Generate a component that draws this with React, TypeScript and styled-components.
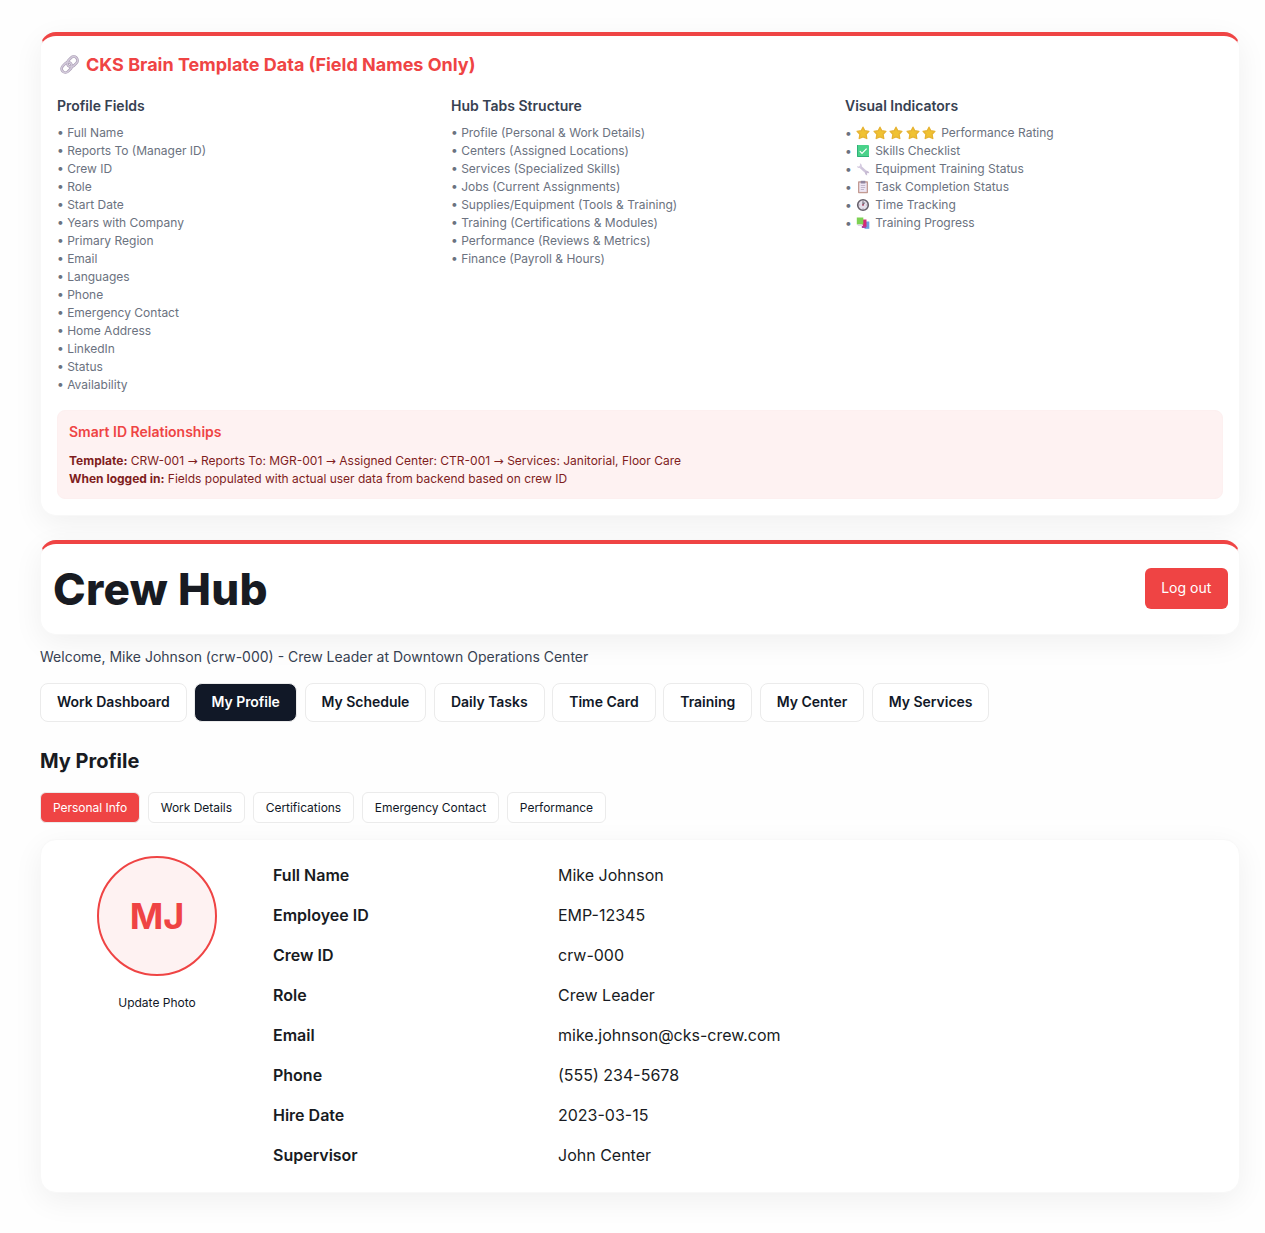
import React from "react";
import styled, { createGlobalStyle, css } from "styled-components";

const RED = "#ef4444";

const GlobalStyle = createGlobalStyle`
  *, *::before, *::after { box-sizing: border-box; }
  html { overflow: hidden; }
  body { margin: 0; background: #fefefe; color: #181b22; font-family: Inter, sans-serif; font-size: 16px; line-height: 24px; }
  h1, h2, h3, p, ul, dl, dd { margin: 0; padding: 0; }
  button { font-family: inherit; margin: 0; }
`;

const Page = styled.main`
  width: 1280px;
  min-height: 1233px;
  padding: 32px 40px 40px;
`;

const Card = styled.section<{ $accent?: boolean }>`
  background: #fff;
  border: 1px solid #f8f8f8;
  border-radius: 16px;
  box-shadow: 0 8px 30px rgba(0, 0, 0, 0.06);
  ${(p) => p.$accent && css`border-top: 4px solid ${RED};`}
`;

const TemplateCard = styled(Card)`
  height: 484px;
  padding: 16px;
  margin-bottom: 24px;
`;

const TemplateTitle = styled.h2`
  display: flex;
  align-items: center;
  gap: 6px;
  height: 25px;
  margin-bottom: 16px;
  padding-left: 2px;
  color: ${RED};
  font-size: 18px;
  font-weight: 700;
`;

const Columns = styled.div`
  display: grid;
  grid-template-columns: repeat(3, 1fr);
  gap: 16px;
  height: 301px;
  margin-bottom: 16px;
`;

const ColumnTitle = styled.h3`
  margin-bottom: 5px;
  color: #374151;
  font-size: 14px;
  line-height: 26px;
  font-weight: 600;
`;

const List = styled.ul`
  list-style: none;
  color: #6b7280;
  font-size: 12px;
  line-height: 18px;
`;

const ListItem = styled.li`
  display: flex;
  align-items: center;
  height: 18px;
  white-space: pre;
`;

const IconRow = styled.span`
  display: inline-flex;
  gap: 2.5px;
  margin: 0 5px 0 1px;
`;

const SmartBox = styled.div`
  height: 89px;
  padding: 10px 11px;
  background: #fef2f2;
  border: 1px solid #fdf0f0;
  border-radius: 8px;
  color: #7f1d1d;
  font-size: 12px;
  line-height: 18px;
`;

const SmartTitle = styled.h3`
  margin-bottom: 10px;
  color: ${RED};
  font-size: 14px;
  line-height: 21px;
  font-weight: 600;
`;

const SmartLine = styled.p`
  height: 18px;
`;

const Arrow = styled.span`
  display: inline-block;
  width: 10.3px;
  font-family: "DejaVu Sans", sans-serif;
  font-size: 12px;
  line-height: 12px;
  text-align: center;
`;

const HubHeader = styled(Card)`
  display: flex;
  align-items: center;
  justify-content: space-between;
  height: 95px;
  padding: 0 11.5px 1px 12px;
`;

const HubTitle = styled.h1`
  padding-top: 2px;
  font-size: 44px;
  line-height: 53px;
  font-weight: 800;
  letter-spacing: 0.3px;
`;

const LogoutButton = styled.button`
  height: 41px;
  width: 82.5px;
  padding: 0 0 2px;
  color: #fff;
  background: ${RED};
  border: 0;
  border-radius: 6px;
  font-size: 14px;
`;

const Welcome = styled.p`
  margin: 11px 0 16px;
  color: #374151;
  font-size: 14px;
  line-height: 21px;
`;

const Tabs = styled.nav`
  display: flex;
  gap: 7.65px;
  margin-bottom: 24px;
`;

const Tab = styled.button<{ $active?: boolean }>`
  height: 39px;
  padding: 0 16px 2px;
  border: 1px solid #ebebeb;
  border-radius: 8px;
  font-size: 14px;
  font-weight: 600;
  letter-spacing: -0.03px;
  color: ${(p) => (p.$active ? "#fff" : "#111827")};
  background: ${(p) => (p.$active ? "#111827" : "#fff")};
`;

const SectionTitle = styled.h2`
  margin-bottom: 16px;
  font-size: 20px;
  line-height: 30px;
  font-weight: 700;
`;

const SubTabs = styled(Tabs)`
  gap: 7.6px;
  margin-bottom: 16px;
`;

const SubTab = styled(Tab)`
  height: 31px;
  padding: 0 12px;
  border-radius: 6px;
  font-size: 12px;
  font-weight: 400;
  letter-spacing: -0.02px;
  background: ${(p) => (p.$active ? RED : "#fff")};
`;

const ProfileCard = styled(Card)`
  display: grid;
  grid-template-columns: 200px 1fr;
  gap: 16px;
  height: 354px;
  padding: 16px;
`;

const PhotoColumn = styled.div`
  display: flex;
  flex-direction: column;
  align-items: center;
`;

const Avatar = styled.div`
  display: flex;
  align-items: center;
  justify-content: center;
  width: 120px;
  height: 120px;
  margin-bottom: 11px;
  border: 2px solid ${RED};
  border-radius: 50%;
  background: #fef2f2;
  color: ${RED};
  font-size: 36px;
  font-weight: 700;
`;

const PhotoButton = styled.button`
  padding: 8px 0;
  border: 0;
  background: none;
  color: #111827;
  font-size: 12px;
`;

const Details = styled.dl`
  display: flex;
  flex-direction: column;
`;

const DetailRow = styled.div`
  display: grid;
  grid-template-columns: 285px 1fr;
  height: 40px;
  padding-bottom: 2px;
  align-items: center;
`;

const DetailLabel = styled.dt`
  font-weight: 600;
`;

const Link = () => (
  <svg width="21" height="21" viewBox="0 0 21 21" fill="none">
    <g transform="rotate(-45 10.5 10.5)">
      <rect x=".8" y="6.8" width="11.4" height="7.6" rx="3.8" stroke="#a79bb2" strokeWidth="2.6" />
      <rect x="8.8" y="6.8" width="11.4" height="7.6" rx="3.8" stroke="#a79bb2" strokeWidth="2.6" />
      <rect x=".8" y="6.8" width="11.4" height="7.6" rx="3.8" stroke="#d3cadb" strokeWidth="1.5" />
      <rect x="8.8" y="6.8" width="11.4" height="7.6" rx="3.8" stroke="#d3cadb" strokeWidth="1.5" />
    </g>
  </svg>
);

const Star = () => (
  <svg width="14" height="14" viewBox="0 0 14 14">
    <path d="M7 1.2 8.8 4.7l4.1.6-2.8 3 .7 4.2L7 10.8l-3.8 1.7.7-4.2-2.8-3 4.1-.6Z" fill="#f0c232" stroke="#e6b231" strokeWidth="1.3" strokeLinejoin="round" />
  </svg>
);

const Check = () => (
  <svg width="14" height="14" viewBox="0 0 14 14">
    <rect x="1" y="1" width="12" height="12" rx="1" fill="#4ad28a" />
    <path d="M1.5 1v11.5H13" fill="none" stroke="#2fb079" />
    <path d="m3.8 7.2 2.2 2.2 4.6-4.7" fill="none" stroke="#fff" strokeWidth="1.2" />
  </svg>
);

const Wrench = () => (
  <svg width="14" height="14" viewBox="0 0 14 14" fill="none">
    <path d="m4.5 5 6 5.5" stroke="#d0c6dc" strokeWidth="2.4" />
    <path d="M3.8 1.2c2.2.6 2.7 3 1.3 4.3C3.6 6.7 1.3 6 .9 4.2l2.1.3 1.1-1.3Z" fill="#d6cce1" />
    <path d="M9.5 9c1.6-.8 3.9.4 3.7 2.3l-1.6-.3-.7.8.4 1.5c-2-.1-3-2.4-1.8-4.3Z" fill="#c8bcd4" />
  </svg>
);

const Clipboard = () => (
  <svg width="14" height="14" viewBox="0 0 14 14">
    <rect x="2" y="1.2" width="10" height="12" rx=".8" fill="#c39b93" />
    <path d="M3.3 2.7h7.4v9.2H3.3z" fill="#eee6f4" />
    <path d="M4.7.8h4.6v2.7H4.7z" fill="#91859f" />
    <path d="M4.8 5.5h4.4M4.8 7.5h4.4M4.8 9.5H8" stroke="#b5abc0" strokeWidth=".8" />
  </svg>
);

const Clock = () => (
  <svg width="14" height="14" viewBox="0 0 14 14">
    <circle cx="7" cy="7" r="5.3" fill="#e5dfeb" stroke="#66606b" strokeWidth="1.6" />
    <path d="M7 2.7v1M7 10.3v1M2.7 7h1M10.3 7h1" stroke="#8c8294" strokeWidth=".7" />
    <path d="M7 7V3.5M7 7l1.6-2.4" stroke="#59505f" />
    <circle cx="7" cy="7" r=".9" fill="#b25570" />
  </svg>
);

const Books = () => (
  <svg width="14" height="14" viewBox="0 0 14 14">
    <path d="M8.5 5.5H13.3v7.3H8.5Z" fill="#6b9fe3" />
    <path d="M6 3.5h4.5v7.5H6z" fill="#d42a78" />
    <path d="M.8 1.5h6.5v7h-6.5z" fill="#7dd152" />
    <path d="M1.3 8.5H7v1.6H2z" fill="#ddd4e5" />
    <path d="M5.5 10.5H10v1.4H6z" fill="#a04aaa" />
  </svg>
);

const profileFields = ["Full Name", "Reports To (Manager ID)", "Crew ID", "Role", "Start Date", "Years with Company", "Primary Region", "Email", "Languages", "Phone", "Emergency Contact", "Home Address", "LinkedIn", "Status", "Availability"];
const hubTabs = ["Profile (Personal & Work Details)", "Centers (Assigned Locations)", "Services (Specialized Skills)", "Jobs (Current Assignments)", "Supplies/Equipment (Tools & Training)", "Training (Certifications & Modules)", "Performance (Reviews & Metrics)", "Finance (Payroll & Hours)"];
const indicators = [
  { icons: [Star, Star, Star, Star, Star], text: "Performance Rating" },
  { icons: [Check], text: "Skills Checklist" },
  { icons: [Wrench], text: "Equipment Training Status" },
  { icons: [Clipboard], text: "Task Completion Status" },
  { icons: [Clock], text: "Time Tracking" },
  { icons: [Books], text: "Training Progress" },
];
const chain = ["CRW-001", "Reports To: MGR-001", "Assigned Center: CTR-001", "Services: Janitorial, Floor Care"];
const tabs = ["Work Dashboard", "My Profile", "My Schedule", "Daily Tasks", "Time Card", "Training", "My Center", "My Services"];
const subTabs = ["Personal Info", "Work Details", "Certifications", "Emergency Contact", "Performance"];
const details = [
  ["Full Name", "Mike Johnson"],
  ["Employee ID", "EMP-12345"],
  ["Crew ID", "crw-000"],
  ["Role", "Crew Leader"],
  ["Email", "mike.johnson@cks-crew.com"],
  ["Phone", "(555) 234-5678"],
  ["Hire Date", "2023-03-15"],
  ["Supervisor", "John Center"],
];

export default function App() {
  return (
    <Page>
      <GlobalStyle />
      <TemplateCard $accent>
        <TemplateTitle><Link />CKS Brain Template Data (Field Names Only)</TemplateTitle>
        <Columns>
          <div>
            <ColumnTitle>Profile Fields</ColumnTitle>
            <List>{profileFields.map((f) => <ListItem key={f}>{`• ${f}`}</ListItem>)}</List>
          </div>
          <div>
            <ColumnTitle>Hub Tabs Structure</ColumnTitle>
            <List>{hubTabs.map((f) => <ListItem key={f}>{`• ${f}`}</ListItem>)}</List>
          </div>
          <div>
            <ColumnTitle>Visual Indicators</ColumnTitle>
            <List>
              {indicators.map(({ icons, text }) => (
                <ListItem key={text}>
                  {"• "}
                  <IconRow>{icons.map((Icon, i) => <Icon key={i} />)}</IconRow>
                  {text}
                </ListItem>
              ))}
            </List>
          </div>
        </Columns>
        <SmartBox>
          <SmartTitle>Smart ID Relationships</SmartTitle>
          <SmartLine>
            <strong>Template:</strong>{" "}
            {chain.map((step, i) => (
              <React.Fragment key={step}>
                {i > 0 && <> <Arrow>→</Arrow> </>}
                {step}
              </React.Fragment>
            ))}
          </SmartLine>
          <SmartLine><strong>When logged in:</strong> Fields populated with actual user data from backend based on crew ID</SmartLine>
        </SmartBox>
      </TemplateCard>
      <HubHeader $accent>
        <HubTitle>Crew Hub</HubTitle>
        <LogoutButton>Log out</LogoutButton>
      </HubHeader>
      <Welcome>Welcome, Mike Johnson (crw-000) - Crew Leader at Downtown Operations Center</Welcome>
      <Tabs>{tabs.map((t) => <Tab key={t} $active={t === "My Profile"}>{t}</Tab>)}</Tabs>
      <SectionTitle>My Profile</SectionTitle>
      <SubTabs>{subTabs.map((t) => <SubTab key={t} $active={t === "Personal Info"}>{t}</SubTab>)}</SubTabs>
      <ProfileCard>
        <PhotoColumn>
          <Avatar>MJ</Avatar>
          <PhotoButton>Update Photo</PhotoButton>
        </PhotoColumn>
        <Details>
          {details.map(([label, value]) => (
            <DetailRow key={label}>
              <DetailLabel>{label}</DetailLabel>
              <dd>{value}</dd>
            </DetailRow>
          ))}
        </Details>
      </ProfileCard>
    </Page>
  );
}
